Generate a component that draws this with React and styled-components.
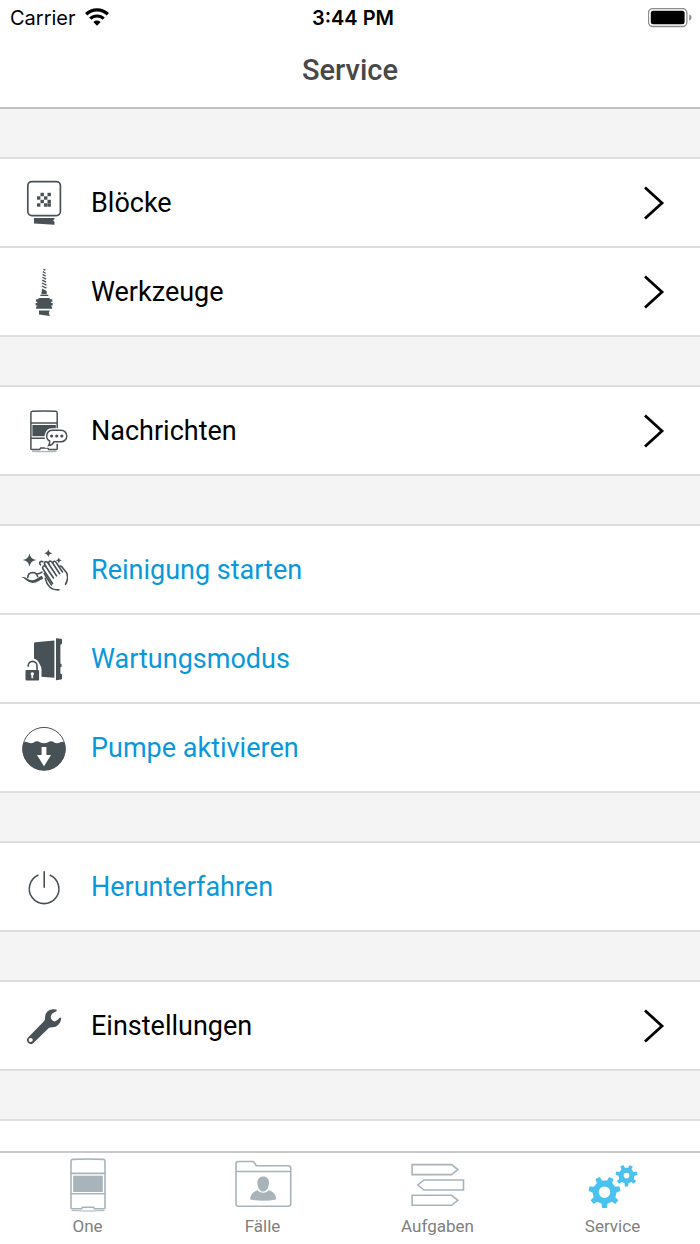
import React from 'react';
import styled, { createGlobalStyle, css } from 'styled-components';

const GlobalStyle = createGlobalStyle`
  * {
    box-sizing: border-box;
  }
  body {
    margin: 0;
    background: #f4f4f4;
    font-family: Roboto, 'Liberation Sans', sans-serif;
  }
`;

const slate = '#485156';
const grey = '#a8b4b9';
const blue = '#0a98da';

const Screen = styled.div`
  display: flex;
  flex-direction: column;
  height: 100vh;
  overflow: hidden;
`;

const StatusBar = styled.div`
  display: grid;
  grid-template-columns: 1fr auto 1fr;
  align-items: center;
  height: 36px;
  padding: 0 4px 0 10px;
  background: #fff;
  color: #000;
  font-family: Inter, 'Liberation Sans', sans-serif;
  font-size: 20px;
`;

const Carrier = styled.div`
  display: flex;
  align-items: center;
  gap: 8px;
`;

const Clock = styled.time`
  font-weight: 600;
`;

const Battery = styled.svg`
  justify-self: end;
`;

const Header = styled.header`
  display: flex;
  align-items: center;
  justify-content: center;
  height: 73px;
  flex-shrink: 0;
  padding-bottom: 4px;
  background: #fff;
  border-bottom: 2px solid #c0c0c0;
`;

const Title = styled.h1`
  margin: 0;
  color: #484848;
  font-size: 29px;
  font-weight: 500;
  line-height: 32px;
`;

const Content = styled.main`
  display: flex;
  flex-direction: column;
  flex: 1;
  gap: 48px;
  min-height: 0;
  padding-top: 48px;
  overflow-y: auto;
  scrollbar-width: none;
`;

const Group = styled.ul`
  flex-shrink: 0;
  margin: 0;
  padding: 0;
  list-style: none;
  background: #fff;
  border-top: 2px solid #dedede;
`;

const Item = styled.li`
  min-height: 89px;
  border-bottom: 2px solid #dedede;
`;

const rowStyles = css`
  display: flex;
  align-items: center;
  gap: 23px;
  width: 100%;
  height: 87px;
  padding: 0 34px 0 20px;
  border: 0;
  background: none;
  font-family: inherit;
  font-size: 27px;
  line-height: 32px;
  text-align: left;
  text-decoration: none;
  cursor: pointer;
`;

const RowLink = styled.a`
  ${rowStyles}
  color: #000;
`;

const RowButton = styled.button`
  ${rowStyles}
  color: ${blue};
`;

const Label = styled.span`
  flex: 1;
`;

const Icon = styled.svg`
  flex-shrink: 0;
  width: 48px;
  height: 48px;
  fill: none;
  stroke: none;
`;

const TabBar = styled.nav`
  display: flex;
  flex-shrink: 0;
  height: 93px;
  background: #fff;
  border-top: 2px solid #c8c8c8;
`;

const Tab = styled.a`
  display: flex;
  flex: 1;
  flex-direction: column;
  align-items: center;
  gap: 3px;
  padding-top: 4px;
  color: #7f7f7f;
  font-size: 17px;
  line-height: 20px;
  text-decoration: none;
`;

const TabIcon = styled.svg`
  width: 64px;
  height: 56px;
  fill: none;
`;

// gear outline with evenly spaced teeth, first one pointing down
function gearPath(cx, cy, outer, root, teeth) {
  const step = (Math.PI * 2) / teeth;
  const points = [];
  for (let i = 0; i < teeth; i++) {
    const a = Math.PI / 2 + i * step;
    [[-0.27, root], [-0.17, outer], [0.17, outer], [0.27, root]].forEach(([t, r]) => {
      points.push(`${(cx + r * Math.cos(a + t * step)).toFixed(2)} ${(cy + r * Math.sin(a + t * step)).toFixed(2)}`);
    });
  }
  return `M${points.join('L')}Z`;
}

function BlockIcon() {
  const cells = [[1, 0], [3, 0], [0, 1], [2, 1], [1, 2], [3, 2], [0, 3], [2, 3], [3, 3]];
  return (
    <Icon viewBox="0 0 48 48" aria-hidden="true">
      <rect x="7.8" y="2.6" width="32.6" height="34" rx="4" stroke={slate} strokeWidth="1.7" />
      {cells.map(([x, y]) => (
        <rect key={`${x}${y}`} x={17 + x * 3.5} y={13.8 + y * 3.5} width="3.4" height="3.4" fill={slate} />
      ))}
      <path d="M14 39h20.500v1.300l-1.500 1 1.500 1.500v3L14 44.400z" fill={slate} />
    </Icon>
  );
}

function ToolIcon() {
  return (
    <Icon viewBox="0 0 48 48" aria-hidden="true">
      <path
        d="M23.400 1.400l2 .8M22.800 3.600l2.800 1.600M22.600 6.400l3.200 1.800M22.400 9.200l3.600 1.900M22.200 12.100l4 2M22 15l4.400 2.100M21.800 18l4.700 2.200"
        stroke={slate}
        strokeWidth="1.300"
      />
      <path d="M22.200 20.500l4.500 2.600v3.200h-5.400z" fill={slate} />
      <path d="M20.300 27.400h8" stroke={slate} strokeWidth="1.300" />
      <path d="M18.500 30h11.200v1.300h2.600v2.400h-1.200v1.300h1.600v2.400h-1.600v1.200h1v2.200H16.100v-2.200h1.200v-1.200h-1.700V35h1.700v-1.300h-1.300v-2.400h2.500z" fill={slate} />
      <path d="M19 42.600h10.800l-1 2.200 1 3.200-10.800-1.400z" fill={slate} />
    </Icon>
  );
}

function MessageIcon() {
  return (
    <Icon viewBox="0 0 48 48" aria-hidden="true">
      <path
        d="M10.900 6q0-1.600 1.600-1.700Q24 3.500 35.600 4.300q1.600.1 1.600 1.700v35.700q0 .7-1 .7h-7.500l-1-1.300h-7l-1 1.300h-7.800q-1 0-1-.7zM10.900 15.900h26.300M10.900 31.200h26.300"
        stroke={slate}
        strokeWidth="1.500"
      />
      <rect x="12.400" y="18" width="23.400" height="11.200" fill={slate} />
      <path d="M12 44.200q12 .9 24.500 0" stroke={grey} strokeWidth="1.400" />
      <path
        d="M33 23.200h8a5.800 5.800 0 0 1 0 11.600h-7q-2 3.400-5.300 3.700 1.400-2 .9-4.500a5.800 5.800 0 0 1 3.400-10.800z"
        fill="#fff"
        stroke="#fff"
        strokeWidth="4"
      />
      <path
        d="M33 23.200h8a5.800 5.800 0 0 1 0 11.600h-7q-2 3.400-5.300 3.700 1.400-2 .9-4.500a5.800 5.800 0 0 1 3.400-10.800z"
        fill="#fff"
        stroke={slate}
        strokeWidth="1.500"
      />
      <g fill={slate}>
        <circle cx="31.600" cy="29" r="1.600" />
        <circle cx="36.700" cy="29" r="1.600" />
        <circle cx="41.800" cy="29" r="1.600" />
      </g>
    </Icon>
  );
}

function CleaningIcon() {
  return (
    <Icon viewBox="0 0 48 48" aria-hidden="true">
      <g fill={slate}>
        <path d="M9.500 7.200q.8 6 6.800 6.800-6 .8-6.800 6.800-.8-6-6.800-6.800 6-.8 6.800-6.800z" />
        <path d="M28.300 3q.5 3.800 4.300 4.300-3.800.5-4.300 4.300-.5-3.800-4.300-4.300 3.800-.5 4.300-4.300z" />
        <path d="M38.800 11.500q.3 2.600 2.900 2.800-2.600.3-2.900 2.900-.3-2.600-2.900-2.900 2.600-.2 2.900-2.800z" />
        <path d="M1 31.300q3.200-.8 5.300.8 6 4.400 11 .2 2.300-2 4.700-2.600l1.200 3.300q-2.700.6-4.400 2-7 4.200-12.900-1Q3.700 31.500 1 31.300z" />
      </g>
      <g stroke={slate} strokeWidth="1.600" strokeLinecap="round" strokeLinejoin="round">
        <path d="M7.800 31.500q.1-4.800 5-5 4 .1 4.800 4M16.300 28q3.300-.1 5.700-1.800" />
        <path d="M20.600 18.800q-1.700-1.500-.4-2.900 1.200-.9 2.700-.2" />
        <path d="M32.500 37.500L23 23q-1-2.200.8-3 1.500-.3 2.300 1l7.400 11" />
        <path d="M26 20.500l-1.400-2.200q-.6-1.900 1-2.500 1.500-.3 2.300 1l8.600 13" />
        <path d="M28.800 17.500q-.5-2.200 1.300-2.500 1.200 0 2 1.200l7.600 11.500" />
        <path d="M33 17q-.2-1.800 1.500-1.700 1.100.2 1.700 1.200l6.300 9.500" />
        <path d="M39.600 20.500q.8-1.200 2.200.2l4.200 5.200q2 2.800 1.500 6.400-.3 3.300-2 6" />
        <path d="M25.300 32.300q1 5.300 4.700 9 2.700 2.800 9 2.500" />
        <path d="M24.200 27.500l7.300 11.500" />
      </g>
    </Icon>
  );
}

function MaintenanceIcon() {
  return (
    <Icon viewBox="0 0 48 48" aria-hidden="true">
      <path d="M14 8.600q0-1.200 1.200-1.300L34.400 5.500v37.200L14 41.200z" fill={slate} />
      <path d="M36 3.200l5 .5q1 .1 1 1.200v3.300q0 1-1 1l-.6.8v18.400l1.200.8v2.500l-1.200.6v6.200l1.100.6q.6.300.6 1v3.200q0 1-1 1.200l-5.100.8z" fill={slate} />
      <path d="M14 27q7.500.5 7.500 8V46H14z" fill="#fff" />
      <path d="M8.200 31.500v-1.200a4.400 4.400 0 0 1 8.800 0V36" stroke="#fff" strokeWidth="5" />
      <path d="M8.200 31.800v-1a4.400 4.400 0 0 1 8.800 0V36" stroke={slate} strokeWidth="1.600" />
      <rect x="5.500" y="35" width="13.600" height="10.400" rx="1" fill={slate} />
      <path d="M12.300 37.200a1.700 1.700 0 0 1 .9 3.100v2.900h-1.800v-2.900a1.700 1.700 0 0 1 .9-3.100z" fill="#fff" />
    </Icon>
  );
}

function PumpIcon() {
  return (
    <Icon viewBox="0 0 48 48" aria-hidden="true">
      <circle cx="24" cy="24.600" r="21.200" stroke={slate} strokeWidth="1" />
      <path d="M3.300 19q2.200-2.200 4.700-.6 4.200 2 7.200-.8 2.500-1 4.700.6 4.100 2.200 8.200 0 2.200-1.600 4.700-.6 3 2.800 7.200.8 2.500-1.600 4.700.6a21.600 21.600 0 1 1-41.400 0z" fill={slate} />
      <path d="M21.600 23h4.800v8H31l-7 11.300L17 31h4.600z" fill="#fff" />
    </Icon>
  );
}

function PowerIcon() {
  return (
    <Icon viewBox="0 0 48 48" aria-hidden="true">
      <path d="M18.500 12.100a14.800 14.800 0 1 0 11.200 0M24.200 8.300v16.500" stroke={slate} strokeWidth="1.600" />
    </Icon>
  );
}

function WrenchIcon() {
  return (
    <Icon viewBox="0 0 48 48" aria-hidden="true">
      <path
        fillRule="evenodd"
        d="M36.300 7.600q-5-1.300-8.700 1.700-2.700 2.600-2.500 6 .2 2.700-1.400 4.200L8.100 35.400a3.800 3.800 0 0 0 5.600 5.300L28.800 26q1.400-1 3.500-.8 3.300.2 5.800-2.200 3.100-3 3.200-6.900-.8-1.300-1.900-.1-2.200 3.200-4.900 3.500-3.400-1.200-3.800-4.500.3-4 5.300-5.500 1.300-.9.300-1.900zM10.700 35.900a2 2 0 1 1 0 4.100 2 2 0 0 1 0-4.100z"
        fill={slate}
      />
    </Icon>
  );
}

function Chevron() {
  return (
    <svg width="24" height="36" viewBox="0 0 24 36" fill="none" aria-hidden="true">
      <path d="M3 2.500L20 18 3 33.500" stroke="#000" strokeWidth="2.800" />
    </svg>
  );
}

const tabs = [
  {
    label: 'One',
    icon: (
      <g>
        <path
          d="M15 4.200q0-1.700 1.700-1.800 15.300-.9 30.600 0 1.700.1 1.700 1.800v46.600q0 1-1 1h-9.500l-1-1.500h-11l-1 1.500H16q-1 0-1-1zM15 16.400h34M15 36.700h34"
          stroke={grey}
          strokeWidth="1.600"
        />
        <rect x="17.200" y="18.700" width="29.600" height="16.300" fill={grey} />
        <path d="M15.500 53.500q16.500 1.200 33 0" stroke={grey} strokeWidth="1" />
      </g>
    ),
  },
  {
    label: 'Fälle',
    icon: (
      <g>
        <path
          d="M5 47V7q0-2.500 2.500-2.500h14q1 0 1.700 1l2.100 3.200h32q2.400 0 2.400 2.500V47q0 2.200-2.200 2.200H7.200Q5 49.200 5 47zM5 14.500h54.700"
          stroke={grey}
          strokeWidth="1.600"
        />
        <path d="M32.200 19.400c3.800 0 6 2.600 5.800 6.500-.2 4.600-2.600 8.600-5.800 8.600s-5.600-4-5.800-8.600c-.2-3.900 2-6.500 5.800-6.500z" fill={grey} />
        <path d="M26.300 33.200q5.900 5 11.800 0 6.900 2.200 7.100 9.200-13 2.800-26 0 .2-7 7.100-9.200z" fill={grey} />
      </g>
    ),
  },
  {
    label: 'Aufgaben',
    icon: (
      <path
        d="M6.100 7.600h39.500l6.200 5-6.200 5H6.100zM57.500 23H18l-6.200 5 6.200 5h39.500zM6.100 38.300h39.500l6.200 5-6.200 5H6.100z"
        stroke={grey}
        strokeWidth="1.600"
      />
    ),
  },
  {
    label: 'Service',
    icon: (
      <path
        d={`${gearPath(23.5, 35.2, 16, 12, 7)}M29.300 35.200a5.800 5.800 0 1 0-11.600 0 5.800 5.800 0 1 0 11.600 0${gearPath(45.5, 18.6, 11, 8, 7)}M48.300 18.600a2.800 2.800 0 1 0-5.600 0 2.800 2.800 0 1 0 5.600 0`}
        fill="#4bc2ee"
        fillRule="evenodd"
      />
    ),
  },
];

const groups = [
  [
    { label: 'Blöcke', Icon: BlockIcon, href: '#bloecke' },
    { label: 'Werkzeuge', Icon: ToolIcon, href: '#werkzeuge' },
  ],
  [{ label: 'Nachrichten', Icon: MessageIcon, href: '#nachrichten' }],
  [
    { label: 'Reinigung starten', Icon: CleaningIcon },
    { label: 'Wartungsmodus', Icon: MaintenanceIcon },
    { label: 'Pumpe aktivieren', Icon: PumpIcon },
  ],
  [{ label: 'Herunterfahren', Icon: PowerIcon }],
  [{ label: 'Einstellungen', Icon: WrenchIcon, href: '#einstellungen' }],
];

function Row({ item }) {
  const ItemIcon = item.Icon;
  if (item.href) {
    return (
      <RowLink href={item.href}>
        <ItemIcon />
        <Label>{item.label}</Label>
        <Chevron />
      </RowLink>
    );
  }
  return (
    <RowButton type="button">
      <ItemIcon />
      <Label>{item.label}</Label>
    </RowButton>
  );
}

export default function App() {
  return (
    <Screen>
      <GlobalStyle />
      <StatusBar>
        <Carrier>
          Carrier
          <svg width="26" height="20" viewBox="0 0 26 20" fill="none" aria-hidden="true">
            <path d="M2.200 6.300a15.500 15.500 0 0 1 21.600 0" stroke="#000" strokeWidth="3.400" />
            <path d="M6.300 10.700a9.600 9.600 0 0 1 13.400 0" stroke="#000" strokeWidth="3.200" />
            <path d="M13 17.800l-3.700-3.900q3.700-2.900 7.400 0z" fill="#000" />
          </svg>
        </Carrier>
        <Clock>3:44 PM</Clock>
        <Battery width="48" height="20" viewBox="0 0 48 20" aria-hidden="true">
          <rect x="0.500" y="0.500" width="38.400" height="18" rx="4.500" fill="none" stroke="#8c8c8c" strokeWidth="1.300" />
          <rect x="2.800" y="2.800" width="33.800" height="13.400" rx="2.500" fill="#000" />
          <path d="M41.200 6.300q2.300.9 2.300 3.200t-2.300 3.200z" fill="#8c8c8c" />
        </Battery>
      </StatusBar>
      <Header>
        <Title>Service</Title>
      </Header>
      <Content>
        {groups.map((items) => (
          <Group key={items[0].label}>
            {items.map((item) => (
              <Item key={item.label}>
                <Row item={item} />
              </Item>
            ))}
          </Group>
        ))}
        <Group>
          <Item />
        </Group>
      </Content>
      <TabBar>
        {tabs.map((tab) => (
          <Tab key={tab.label} href={`#${tab.label.toLowerCase()}`}>
            <TabIcon viewBox="0 0 64 56" aria-hidden="true">
              {tab.icon}
            </TabIcon>
            {tab.label}
          </Tab>
        ))}
      </TabBar>
    </Screen>
  );
}
